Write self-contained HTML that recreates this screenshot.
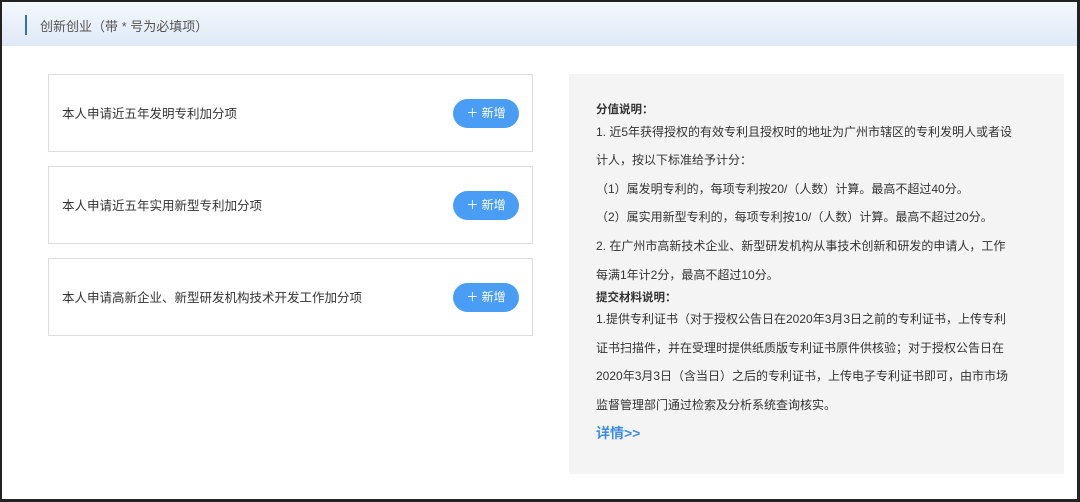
<!DOCTYPE html>
<html><head><meta charset="utf-8"><style>
*{margin:0;padding:0;box-sizing:border-box}
body{width:1080px;height:502px;overflow:hidden;background:#fff;font-family:"Liberation Sans","Noto Sans CJK SC",sans-serif;color:#333;position:relative}
.frame{position:absolute;left:0;top:0;width:1080px;height:502px;border:2px solid #222;border-right-width:3px;border-bottom-width:3px}
.hd{position:absolute;left:2px;top:2px;width:1075px;height:44px;background:linear-gradient(#f4f8fd,#dfe9f6)}
.hd .bar{position:absolute;left:23px;top:13px;width:2px;height:20px;background:#3a6fa8}
.hd span{position:absolute;left:38px;top:14px;font-size:13px;color:#555}
.card{position:absolute;left:48px;width:485px;height:78px;border:1px solid #ddd;background:#fff}
.card span{position:absolute;left:13px;top:28px;font-size:12.5px;color:#333}
.btn{position:absolute;left:404px;top:24px;width:66px;height:29px;border-radius:15px;background:#4a9df5;color:#fff;font-size:12px;text-align:center;line-height:29px}
.rp{position:absolute;left:569px;top:74px;width:495px;height:400px;background:#f4f4f4}
.t{position:absolute;left:27px;font-size:12px;color:#333;white-space:nowrap}
.b{font-weight:bold;font-size:11.5px}
.more{color:#3d8ee8;font-weight:bold;font-size:14px}
</style></head><body>
<div class="hd"><div class="bar"></div><span>创新创业（带 * 号为必填项）</span></div>
<div class="card" style="top:74px"><span>本人申请近五年发明专利加分项</span><div class="btn">＋ 新增</div></div>
<div class="card" style="top:166px"><span>本人申请近五年实用新型专利加分项</span><div class="btn">＋ 新增</div></div>
<div class="card" style="top:258px"><span>本人申请高新企业、新型研发机构技术开发工作加分项</span><div class="btn">＋ 新增</div></div>
<div class="rp">
<div class="t b" style="top:27px">分值说明：</div>
<div class="t" style="top:49px">1. 近5年获得授权的有效专利且授权时的地址为广州市辖区的专利发明人或者设</div>
<div class="t" style="top:77px">计人，按以下标准给予计分：</div>
<div class="t" style="top:106px">（1）属发明专利的，每项专利按20/（人数）计算。最高不超过40分。</div>
<div class="t" style="top:134px">（2）属实用新型专利的，每项专利按10/（人数）计算。最高不超过20分。</div>
<div class="t" style="top:163px">2. 在广州市高新技术企业、新型研发机构从事技术创新和研发的申请人，工作</div>
<div class="t" style="top:192px">每满1年计2分，最高不超过10分。</div>
<div class="t b" style="top:215px">提交材料说明：</div>
<div class="t" style="top:236px">1.提供专利证书（对于授权公告日在2020年3月3日之前的专利证书，上传专利</div>
<div class="t" style="top:265px">证书扫描件，并在受理时提供纸质版专利证书原件供核验；对于授权公告日在</div>
<div class="t" style="top:293px">2020年3月3日（含当日）之后的专利证书，上传电子专利证书即可，由市市场</div>
<div class="t" style="top:322px">监督管理部门通过检索及分析系统查询核实。</div>
<div class="t more" style="top:349px">详情&gt;&gt;</div>
</div>
<div class="frame"></div>
</body></html>
